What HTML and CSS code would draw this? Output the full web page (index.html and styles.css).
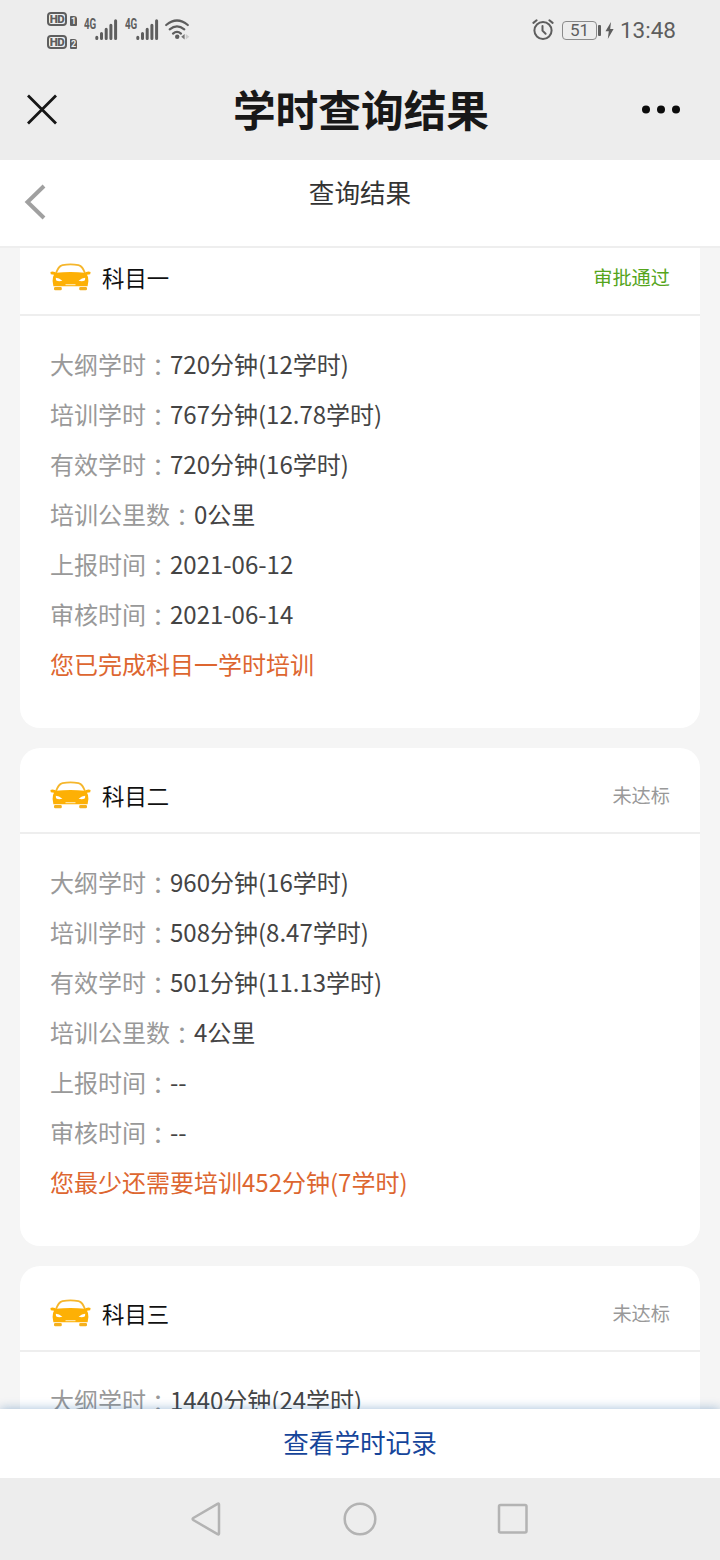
FILE: index.html
```
<!DOCTYPE html>
<html lang="zh-CN">
<head>
  <meta charset="UTF-8">
  <meta name="viewport" content="width=device-width, initial-scale=1.0">
  <title>学时查询结果</title>
  <link rel="stylesheet" href="styles.css">
</head>
<body>
  <svg class="symbols" xmlns="http://www.w3.org/2000/svg">
    <symbol id="car" viewBox="0 0 42 28">
      <path d="M6 10 C8 5 9.2 2.9 12.5 2.1 C17.5 1.3 23.5 1.3 28.5 2.1 C31.8 2.9 33 5 35 10" fill="none" stroke="#f5b62c" stroke-width="1.8"/>
      <path d="M0.4 9 Q2.4 7.8 4.8 9 L6 9.8 Q20.5 8.4 35 9.8 L36.2 9 Q38.6 7.8 40.6 9 L40.2 11.2 L37 11.8 Q38.6 14 38.4 18 L37.6 23.2 H3.4 L2.6 18 Q2.4 14 4 11.8 L0.8 11.2 Z" fill="#fdb005"/>
      <path d="M5.8 14.8 Q9 14.8 12.4 17.8 Q8.4 18.9 6 17.2 Z M35.2 14.8 Q32 14.8 28.6 17.8 Q32.6 18.9 35 17.2 Z" fill="#fff"/>
      <path d="M15.5 21.2 H25.5 V22.2 H15.5 Z" fill="#fff2c8"/>
      <rect x="4" y="24" width="7.8" height="3.2" rx="1.2" fill="#f5b01c"/>
      <rect x="29.2" y="24" width="7.8" height="3.2" rx="1.2" fill="#f5b01c"/>
    </symbol>
    <symbol id="signal" viewBox="0 0 23 22">
      <path d="M1.8 18.2V19.6 M6.5 14.5V19.6 M11.2 10.3V19.6 M15.9 6.2V19.6 M20.6 1.8V19.6" fill="none" stroke="#5e5e5e" stroke-width="3" stroke-linecap="round"/>
    </symbol>
  </svg>

  <div class="status-bar">
    <div class="hd-group">
      <div class="hd"><span class="hd-badge">HD</span><span class="sim">1</span></div>
      <div class="hd"><span class="hd-badge">HD</span><span class="sim">2</span></div>
    </div>
    <div class="network"><span>4G</span><svg width="23" height="22"><use href="#signal"/></svg></div>
    <div class="network"><span>4G</span><svg width="23" height="22"><use href="#signal"/></svg></div>
    <svg class="wifi" width="26" height="22" viewBox="0 0 26 22" fill="none" stroke="#5e5e5e" stroke-width="2.2" stroke-linecap="round">
      <path d="M1.2 6 Q12 -3 22.8 6"/>
      <path d="M4.7 10.4 Q12 4.2 19.3 10.4"/>
      <path d="M8 14.6 Q12 11 16 14.6"/>
      <circle cx="12.2" cy="17.8" r="2.2" fill="#5e5e5e" stroke="none"/>
      <path d="M16.2 17.8 L19.6 15 V20.6 Z" fill="#777" stroke="none"/>
      <path d="M24.4 17.8 L20.8 15 V20.6 Z" fill="#ccc" stroke="none"/>
    </svg>
    <div class="status-right">
      <svg width="22" height="22" viewBox="0 0 22 22" fill="none" stroke="#5e5e5e" stroke-width="2" stroke-linecap="round">
        <circle cx="11" cy="11.5" r="8.6"/>
        <path d="M10.5 7V11.7L13.6 14.7"/>
        <path d="M1.4 3.9L4.6 1.3 M20.6 3.9L17.4 1.3"/>
      </svg>
      <div class="battery">51</div>
      <div class="battery-cap"></div>
      <svg class="bolt" width="9" height="17" viewBox="0 0 9 17"><path d="M6 0L0.5 9.3H3.8L2.8 17L8.6 7H5.2Z" fill="#5e5e5e"/></svg>
      <span class="clock">13:48</span>
    </div>
  </div>

  <div class="title-bar">
    <svg width="32" height="32" viewBox="0 0 32 32"><path d="M2 1.5L30 29.5M30 1.5L2 29.5" stroke="#161616" stroke-width="2.8"/></svg>
    <h1>学时查询结果</h1>
    <svg width="40" height="10" viewBox="0 0 40 10" fill="#0c0c0c"><circle cx="5" cy="4.5" r="4"/><circle cx="20" cy="4.5" r="4"/><circle cx="35" cy="4.5" r="4"/></svg>
  </div>

  <div class="nav">
    <svg width="24" height="36" viewBox="0 0 24 36"><path d="M22 2L5.5 18L22 34" fill="none" stroke="#a0a0a0" stroke-width="4"/></svg>
    <h2>查询结果</h2>
  </div>

  <div class="content">
    <div class="card">
      <div class="card-header">
        <svg width="42" height="28"><use href="#car"/></svg>
        <h3>科目一</h3>
        <span class="state pass">审批通过</span>
      </div>
      <div class="card-body">
        <p><label>大纲学时<i lang="zh-TW">：</i></label>720分钟(12学时)</p>
        <p><label>培训学时<i lang="zh-TW">：</i></label>767分钟(12.78学时)</p>
        <p><label>有效学时<i lang="zh-TW">：</i></label>720分钟(16学时)</p>
        <p><label>培训公里数<i lang="zh-TW">：</i></label>0公里</p>
        <p><label>上报时间<i lang="zh-TW">：</i></label>2021-06-12</p>
        <p><label>审核时间<i lang="zh-TW">：</i></label>2021-06-14</p>
        <p class="tip">您已完成科目一学时培训</p>
      </div>
    </div>

    <div class="card">
      <div class="card-header">
        <svg width="42" height="28"><use href="#car"/></svg>
        <h3>科目二</h3>
        <span class="state">未达标</span>
      </div>
      <div class="card-body">
        <p><label>大纲学时<i lang="zh-TW">：</i></label>960分钟(16学时)</p>
        <p><label>培训学时<i lang="zh-TW">：</i></label>508分钟(8.47学时)</p>
        <p><label>有效学时<i lang="zh-TW">：</i></label>501分钟(11.13学时)</p>
        <p><label>培训公里数<i lang="zh-TW">：</i></label>4公里</p>
        <p><label>上报时间<i lang="zh-TW">：</i></label>--</p>
        <p><label>审核时间<i lang="zh-TW">：</i></label>--</p>
        <p class="tip">您最少还需要培训452分钟(7学时)</p>
      </div>
    </div>

    <div class="card">
      <div class="card-header">
        <svg width="42" height="28"><use href="#car"/></svg>
        <h3>科目三</h3>
        <span class="state">未达标</span>
      </div>
      <div class="card-body">
        <p><label>大纲学时<i lang="zh-TW">：</i></label>1440分钟(24学时)</p>
      </div>
    </div>
  </div>

  <div class="record-btn">查看学时记录</div>

  <div class="system-nav">
    <svg width="34" height="36" viewBox="0 0 34 36"><path d="M29 3.5V32.5Q29 34 27.5 33.2L3.3 19Q1.9 18 3.3 17L27.5 2.8Q29 2 29 3.5Z"/></svg>
    <svg width="36" height="36" viewBox="0 0 36 36"><circle cx="18" cy="18" r="15.3"/></svg>
    <svg width="34" height="36" viewBox="0 0 34 36"><rect x="3" y="4" width="27.5" height="27.5" rx="1.5"/></svg>
  </div>
</body>
</html>
```
FILE: styles.css
```
* {
  box-sizing: border-box;
}
body {
  margin: 0;
  height: 1560px;
  display: flex;
  flex-direction: column;
  overflow: hidden;
  background-color: #f5f5f5;
  font-family: "Noto Sans CJK SC", sans-serif;
}
h1, h2, h3, p {
  margin: 0;
}
svg {
  display: block;
  flex-shrink: 0;
}
.symbols {
  display: none;
}

/* phone status bar */
.status-bar {
  height: 60px;
  flex-shrink: 0;
  display: flex;
  padding: 0 44px 0 47px;
  background-color: #ededed;
  color: #5e5e5e;
  font-family: Roboto, sans-serif;
}
.hd-group {
  width: 37px;
  padding-top: 12px;
}
.hd {
  display: flex;
  align-items: flex-end;
  gap: 3px;
  height: 14px;
  margin-bottom: 9px;
}
.hd-badge {
  width: 20px;
  height: 14px;
  border: 2px solid #5e5e5e;
  border-radius: 4px;
  font-size: 11.5px;
  font-weight: 900;
  line-height: 10px;
  letter-spacing: -0.5px;
  text-align: center;
}
.sim {
  width: 7px;
  height: 10px;
  border-radius: 1px 3px 1px 1px;
  background-color: #5e5e5e;
  color: #ededed;
  font-size: 9px;
  font-weight: 700;
  line-height: 10px;
  text-align: center;
}
.network {
  display: flex;
  width: 41px;
  padding-top: 19px;
}
.network span {
  width: 11px;
  font-size: 14px;
  font-weight: 700;
  line-height: 11px;
  transform: scaleX(0.7);
  transform-origin: left;
}
.wifi {
  margin: 19px 0 0 -1px;
}
.status-right {
  display: flex;
  align-items: center;
  margin-left: auto;
}
.battery {
  width: 35px;
  height: 19px;
  margin-left: 8px;
  border: 1.5px solid #8a8a8a;
  border-radius: 4px;
  font-size: 17px;
  line-height: 17px;
  text-align: center;
}
.battery-cap {
  width: 3px;
  height: 11px;
  margin-left: 1px;
  border-radius: 1px;
  background-color: #5e5e5e;
}
.bolt {
  margin: 0 6px 0 4px;
}
.clock {
  font-size: 22.5px;
}

.title-bar {
  height: 100px;
  flex-shrink: 0;
  display: flex;
  justify-content: space-between;
  align-items: center;
  padding: 0 39px 0 26px;
  background-color: #ededed;
}
.title-bar h1 {
  padding: 0 0 4px 23px;
  color: #181818;
  font-size: 42.7px;
  font-weight: 700;
  line-height: 60px;
}

.nav {
  height: 88px;
  flex-shrink: 0;
  display: flex;
  padding: 0 22px;
  background-color: #fff;
  border-bottom: 2px solid #eee;
}
.nav svg {
  margin-top: 24px;
}
.nav h2 {
  flex: 1;
  padding-right: 24px;
  color: #333;
  font-size: 25.6px;
  font-weight: 400;
  line-height: 64px;
  text-align: center;
}

/* the list is scrolled a little, so the first card starts under the nav */
.content {
  flex: 1;
  min-height: 0;
  overflow: hidden;
  padding: 0 20px;
}
.card {
  margin-bottom: 20px;
  border-radius: 20px;
  background-color: #fff;
}
.card:first-child {
  margin-top: -18px;
}
.card-header {
  height: 86px;
  display: flex;
  align-items: center;
  padding: 10px 30px 0;
  border-bottom: 2px solid #eee;
}
.card-header h3 {
  margin-left: 10px;
  color: #111;
  font-size: 22.4px;
  font-weight: 400;
}
.state {
  margin-left: auto;
  color: #999;
  font-size: 19.2px;
}
.pass {
  color: #55a51c;
}
.card-body {
  padding: 23px 30px 39px;
  color: #444;
  font-size: 24px;
  line-height: 50px;
}
.card-body label {
  color: #999;
}
/* colon centred in its cell */
.card-body i {
  font-family: "Noto Sans CJK TC", sans-serif;
  font-style: normal;
  line-height: 1;
  vertical-align: -2px;
}
.card-body .tip {
  color: #dd6630;
}

.record-btn {
  position: relative;
  height: 69px;
  flex-shrink: 0;
  background-color: #fff;
  box-shadow: 0 0 10px rgba(20, 90, 160, 0.4);
  color: #16459a;
  font-size: 25.6px;
  line-height: 66px;
  text-align: center;
}

.system-nav {
  position: relative;
  height: 82px;
  flex-shrink: 0;
  display: flex;
  justify-content: space-between;
  align-items: center;
  padding: 0 190px;
  background-color: #ededed;
}
.system-nav svg {
  fill: none;
  stroke: #b3b3b3;
  stroke-width: 2.5;
}
```
